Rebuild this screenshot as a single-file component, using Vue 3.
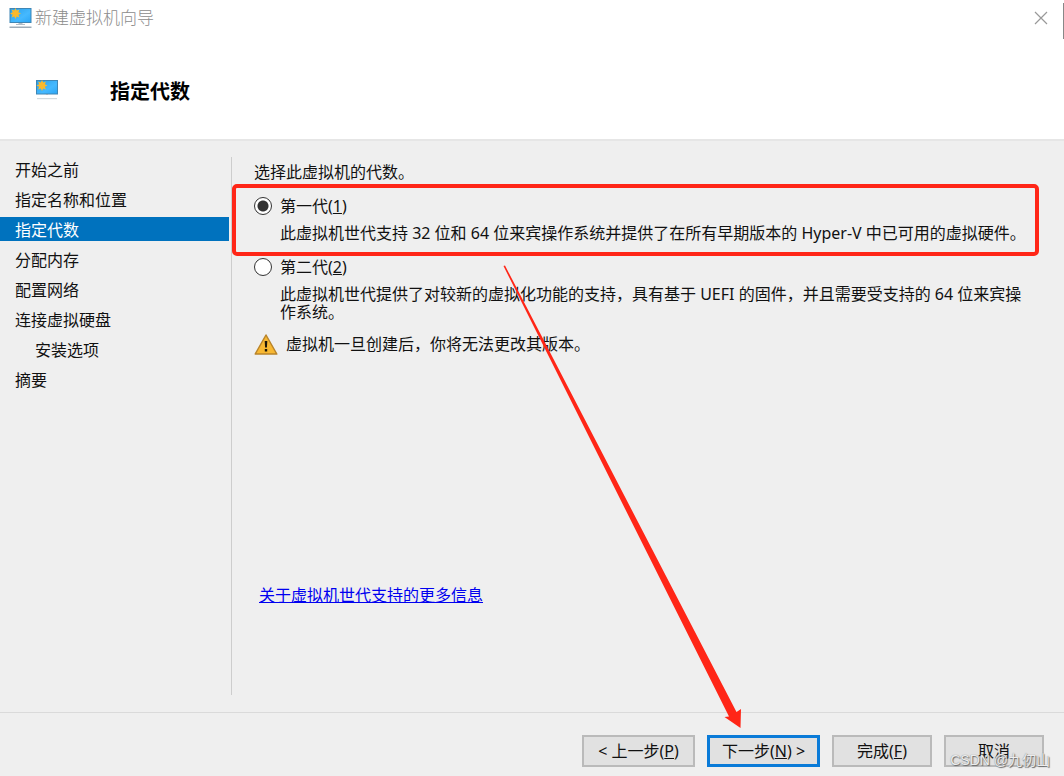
<script setup>
import { ref } from 'vue'

const steps = [
  { label: '开始之前' },
  { label: '指定名称和位置' },
  { label: '指定代数', current: true },
  { label: '分配内存' },
  { label: '配置网络' },
  { label: '连接虚拟硬盘' },
  { label: '安装选项', nested: true },
  { label: '摘要' },
]

const generations = [
  {
    id: 'gen1',
    name: '第一代',
    key: '1',
    text: '此虚拟机世代支持 32 位和 64 位来宾操作系统并提供了在所有早期版本的 Hyper-V 中已可用的虚拟硬件。',
    marked: true,
  },
  {
    id: 'gen2',
    name: '第二代',
    key: '2',
    text: '此虚拟机世代提供了对较新的虚拟化功能的支持，具有基于 UEFI 的固件，并且需要受支持的 64 位来宾操作系统。',
  },
]

const selected = ref('gen1')
</script>

<template>
  <div class="wizard">
    <header class="top">
      <div class="titlebar">
        <svg class="pc" viewBox="0 0 24 22" aria-hidden="true">
          <defs>
            <linearGradient id="screenA" x1="0" y1="0" x2="1" y2="1">
              <stop offset="0" stop-color="#2b9fe8" />
              <stop offset="0.6" stop-color="#45b9ff" />
              <stop offset="1" stop-color="#2aa5f5" />
            </linearGradient>
          </defs>
          <rect x="2" y="1.5" width="21" height="14" fill="url(#screenA)" stroke="#3f86b5" />
          <path d="M7.5 1l1.2 2.6 2.7-1-1 2.7 2.6 1.2-2.6 1.2 1 2.7-2.7-1-1.2 2.6-1.2-2.6-2.7 1 1-2.7L2 6.5l2.6-1.2-1-2.7 2.7 1z" fill="#fbb92c" />
          <path d="M10.5 16h4v1h2.5v1h-9v-1h2.5z" fill="#b3bdc6" />
          <path d="M1.5 19.5h22v1.5h-22z" fill="#9eacb8" />
        </svg>
        <span class="caption">新建虚拟机向导</span>
        <button class="close" type="button" aria-label="关闭">
          <svg viewBox="0 0 14 14" aria-hidden="true"><path d="M1 1l12 12M13 1L1 13" stroke="#999" stroke-width="1.2" fill="none" /></svg>
        </button>
      </div>
      <div class="heading">
        <svg class="pc" viewBox="0 0 24 22" aria-hidden="true">
          <rect x="1.5" y="1.5" width="21" height="13.5" fill="url(#screenA)" stroke="#3f86b5" />
          <path d="M7 1l1.2 2.6 2.7-1-1 2.7 2.6 1.2-2.6 1.2 1 2.7-2.7-1-1.2 2.6-1.2-2.6-2.7 1 1-2.7L1.5 6.5l2.6-1.2-1-2.7 2.7 1z" fill="#fbb92c" />
          <path d="M11 15h2v1h-2z" fill="#9eacb8" />
          <path d="M2 19h20v1.2h-20z" fill="#d3dade" />
        </svg>
        <h1>指定代数</h1>
      </div>
    </header>

    <main class="body">
      <nav class="steps">
        <ol>
          <li v-for="s in steps" :key="s.label" :class="{ current: s.current, nested: s.nested }">{{ s.label }}</li>
        </ol>
      </nav>

      <section class="content">
        <p class="intro">选择此虚拟机的代数。</p>
        <div v-for="g in generations" :key="g.id" class="option" :class="{ marked: g.marked }">
          <input :id="g.id" v-model="selected" type="radio" name="generation" :value="g.id" />
          <label :for="g.id">{{ g.name }}(<u>{{ g.key }}</u>)</label>
          <p>{{ g.text }}</p>
        </div>
        <div class="warning">
          <svg viewBox="0 0 24 22" aria-hidden="true">
            <path d="M12 2L22.8 21H1.2z" fill="#f8b832" stroke="#b9842a" stroke-width="1.5" stroke-linejoin="round" />
            <path d="M10.7 8h2.6l-.4 6.5h-1.8z" fill="#1c1608" />
            <path d="M10.8 16h2.4v2.5h-2.4z" fill="#1c1608" />
          </svg>
          <span>虚拟机一旦创建后，你将无法更改其版本。</span>
        </div>
        <a class="more" href="#">关于虚拟机世代支持的更多信息</a>
      </section>
    </main>

    <footer class="actions">
      <button class="wide" type="button">&lt; 上一步(<u>P</u>)</button>
      <button class="wide primary" type="button">下一步(<u>N</u>) &gt;</button>
      <button type="button">完成(<u>F</u>)</button>
      <button type="button">取消</button>
    </footer>

    <svg class="arrow" viewBox="0 0 1064 776" aria-hidden="true">
      <path d="M503.5 266L505 265.5L736.5 712L741 709L740.5 728L724.5 717L729 716.5z" fill="#ff2617" />
    </svg>
    <span class="watermark">CSDN @九仞山</span>
  </div>
</template>

<style>
body {
  margin: 0;
}
</style>

<style scoped>
.wizard {
  position: relative;
  display: flex;
  flex-direction: column;
  box-sizing: border-box;
  min-height: 100vh;
  overflow: hidden;
  background: #efefef;
  color: #111;
  font: 16px/18px "Noto Sans", "Noto Sans CJK SC", sans-serif;
}
.top {
  position: relative;
  height: 139px;
  background: #fff;
  border-bottom: 2px solid #e6e6e6;
}
.top::after {
  content: "";
  position: absolute;
  top: 3px;
  right: 0;
  width: 1px;
  height: 36px;
  background: #888;
}
.titlebar {
  display: flex;
  align-items: center;
  height: 36px;
  padding: 0 16px 0 8px;
}
.pc {
  width: 24px;
  height: 22px;
  flex: none;
}
.caption {
  flex: 1;
  margin-left: 3px;
  color: #8c8c8c;
  font-size: 17px;
  font-weight: 300;
}
.close {
  display: flex;
  padding: 0;
  border: 0;
  background: none;
}
.close svg {
  width: 14px;
  height: 14px;
}
.heading {
  display: flex;
  gap: 51px;
  padding: 43px 0 0 35px;
}
h1 {
  margin: 0;
  color: #000;
  font-size: 20px;
  line-height: 26px;
}
.body {
  display: flex;
  flex: 1;
}
.steps {
  flex: none;
  width: 231px;
  margin: 16px 0 17px;
  border-right: 1px solid #cdcdcd;
}
ol {
  display: flex;
  flex-direction: column;
  gap: 6px;
  margin: 0 2px 0 0;
  padding: 0;
  list-style: none;
}
li {
  height: 24px;
  padding-left: 15px;
  line-height: 27px;
}
li.nested {
  padding-left: 35px;
}
li.current {
  background: #0072be;
  color: #fff;
}
.content {
  display: flex;
  flex: 1;
  flex-direction: column;
  align-items: flex-start;
  padding: 22px 28px 0 22px;
}
p {
  margin: 0;
}
.option {
  position: relative;
  display: grid;
  grid-template-columns: 18px 1fr;
  column-gap: 8px;
  row-gap: 9px;
  align-items: center;
  align-self: stretch;
  margin-top: 16px;
}
.option p {
  grid-column: 2;
}
.option.marked::before {
  content: "";
  position: absolute;
  inset: -13px -3px -14px -22px;
  border: 4px solid #ff2617;
  border-radius: 5px;
  pointer-events: none;
}
input {
  appearance: none;
  box-sizing: border-box;
  width: 18px;
  height: 18px;
  margin: 0;
  border: 1px solid #333;
  border-radius: 50%;
  background: #fff;
}
input:checked {
  background: radial-gradient(circle, #333 0 5px, #fff 6px);
}
.warning {
  display: flex;
  align-items: center;
  gap: 8px;
  margin-top: 12px;
}
.warning svg {
  width: 24px;
  height: 22px;
}
.more {
  margin: auto 0 108px 5px;
  color: #0000f0;
}
.actions {
  display: flex;
  justify-content: flex-end;
  gap: 12px;
  padding: 22px 20px 9px;
  border-top: 1px solid #dadada;
}
button {
  color: #111;
  font: inherit;
}
.actions button {
  width: 100px;
  height: 32px;
  padding: 0;
  border: 2px solid #bababa;
  background: #e1e1e1;
}
.actions .wide {
  width: 113px;
}
.actions .primary {
  border: 3px solid #0a7bd8;
}
.arrow {
  position: absolute;
  inset: 0;
  width: 100%;
  height: 100%;
  pointer-events: none;
}
.watermark {
  position: absolute;
  right: 14px;
  bottom: 7px;
  color: #ededed;
  font-family: "Liberation Sans", "Noto Sans CJK SC", sans-serif;
  font-size: 14px;
  text-shadow: 1px 1px 1px #666, 0 0 1px #777;
}
</style>
